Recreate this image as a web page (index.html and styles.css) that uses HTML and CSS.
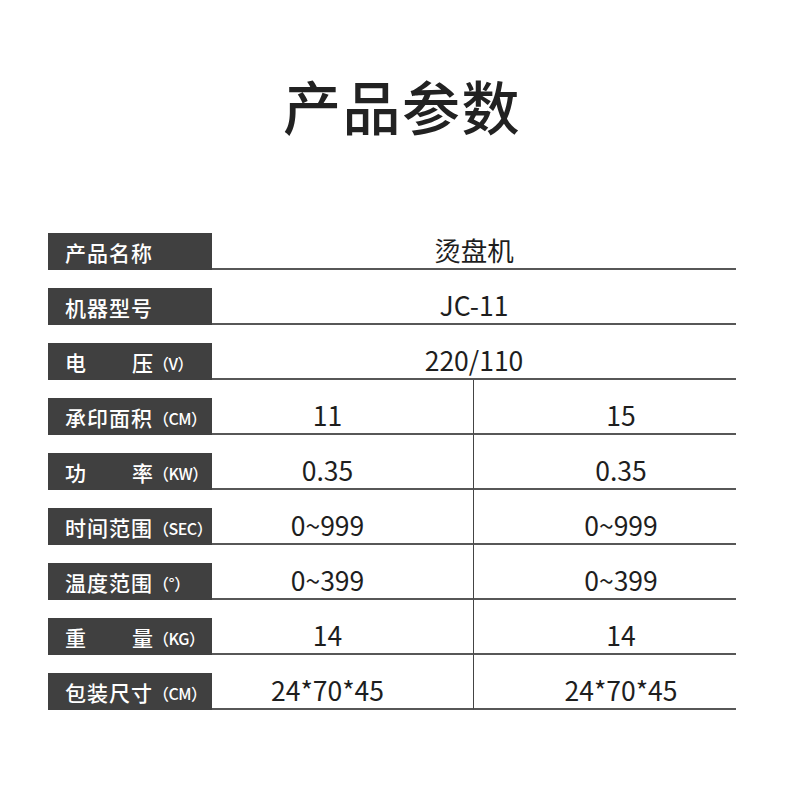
FILE: index.html
```html
<!DOCTYPE html>
<html lang="zh-CN">
<head>
<meta charset="utf-8">
<title>产品参数</title>
<link rel="stylesheet" href="styles.css">
</head>
<body>
<div class="page">
  <h1 class="title">产品参数</h1>
  <div class="table">
    <div class="row single">
      <div class="label"><span class="name">产品名称</span></div>
      <div class="cell">烫盘机</div>
    </div>
    <div class="row single">
      <div class="label"><span class="name">机器型号</span></div>
      <div class="cell">JC-11</div>
    </div>
    <div class="row single">
      <div class="label"><span class="name spread"><span>电</span><span>压</span></span><span class="unit">（V）</span></div>
      <div class="cell">220/110</div>
    </div>
    <div class="row double">
      <div class="label"><span class="name">承印面积</span><span class="unit">（CM）</span></div>
      <div class="cell c1">11</div>
      <div class="cell c2">15</div>
    </div>
    <div class="row double">
      <div class="label"><span class="name spread"><span>功</span><span>率</span></span><span class="unit">（KW）</span></div>
      <div class="cell c1">0.35</div>
      <div class="cell c2">0.35</div>
    </div>
    <div class="row double">
      <div class="label"><span class="name">时间范围</span><span class="unit">（SEC）</span></div>
      <div class="cell c1">0~999</div>
      <div class="cell c2">0~999</div>
    </div>
    <div class="row double">
      <div class="label"><span class="name">温度范围</span><span class="unit">（°）</span></div>
      <div class="cell c1">0~399</div>
      <div class="cell c2">0~399</div>
    </div>
    <div class="row double">
      <div class="label"><span class="name spread"><span>重</span><span>量</span></span><span class="unit">（KG）</span></div>
      <div class="cell c1">14</div>
      <div class="cell c2">14</div>
    </div>
    <div class="row double">
      <div class="label"><span class="name">包装尺寸</span><span class="unit">（CM）</span></div>
      <div class="cell c1">24*70*45</div>
      <div class="cell c2">24*70*45</div>
    </div>
  </div>
</div>
</body>
</html>
```
FILE: styles.css
```css
* {
  box-sizing: border-box;
}

html, body {
  margin: 0;
  padding: 0;
  background: #ffffff;
}

body {
  font-family: "Noto Sans CJK SC", "Noto Sans", sans-serif;
  color: #1e1e1e;
}

.page {
  width: 800px;
  height: 800px;
  padding-top: 76px;
}

.title {
  margin: 0 0 81px 0;
  padding-left: 4px;
  font-size: 58px;
  line-height: 58px;
  font-weight: 500;
  text-align: center;
  color: #222222;
  letter-spacing: 1.5px;
}

.table {
  margin-left: 48px;
  width: 688px;
}

.row {
  display: grid;
  height: 55px;
  align-items: end;
}

.row.single {
  grid-template-columns: 164px 1fr;
}

.row.double {
  grid-template-columns: 164px 261px 1fr;
}

.label {
  height: 37px;
  background: #404040;
  color: #ffffff;
  padding-left: 17px;
  display: flex;
  align-items: center;
  white-space: nowrap;
}

.name {
  font-size: 21px;
  line-height: 37px;
  font-weight: 500;
  width: 88px;
  letter-spacing: 1px;
  padding-top: 1px;
}

.name.spread {
  display: flex;
  justify-content: space-between;
  letter-spacing: 0;
}

.unit {
  font-size: 16px;
  line-height: 37px;
  font-weight: 500;
  margin-left: 0;
  padding-top: 4px;
  letter-spacing: -0.5px;
}

.cell {
  height: 55px;
  border-bottom: 2px solid #575757;
  display: flex;
  align-items: flex-end;
  justify-content: center;
  font-size: 26.5px;
  line-height: 37px;
  color: #1e1e1e;
}

.cell.c1 {
  padding-right: 30px;
}

.cell.c2 {
  border-left: 1px solid #444444;
  padding-left: 32px;
}
```
